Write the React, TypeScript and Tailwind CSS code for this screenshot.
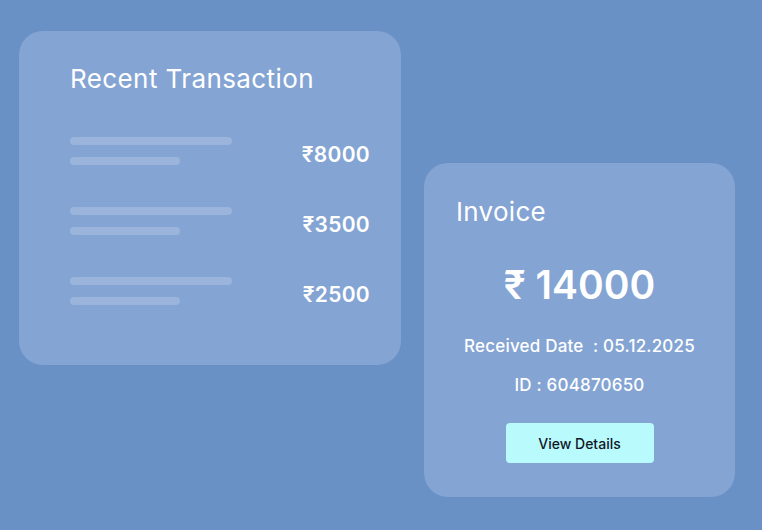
export default function App() {
  const rows = ["₹8000", "₹3500", "₹2500"];
  return (
    <div
      className="w-[762px] h-[530px] bg-[#6a91c6] flex items-start gap-[23px] pl-[19px] pt-[31px] overflow-hidden"
      style={{ fontFamily: "Inter, 'Noto Sans', sans-serif" }}
    >
      <div className="w-[382px] h-[334px] rounded-[24px] bg-[#84a4d3] pl-[51px] pr-[31px] pt-[31px] flex flex-col">
        <div className="text-white text-[26px] leading-[34px] font-normal tracking-[0.4px]">Recent Transaction</div>
        <div className="mt-[41px] flex flex-col gap-[42px]">
          {rows.map((r) => (
            <div key={r} className="flex items-center justify-between h-[28px]">
              <div className="flex flex-col gap-[12px]">
                <div className="w-[162px] h-[8px] rounded-full bg-[#9ab4dc]" />
                <div className="w-[110px] h-[8px] rounded-full bg-[#9ab4dc]" />
              </div>
              <div className="text-white text-[21px] font-semibold leading-none mt-[6px] tracking-[0.3px]">{r}</div>
            </div>
          ))}
        </div>
      </div>
      <div className="mt-[132px] w-[311px] h-[334px] rounded-[24px] bg-[#84a4d3] pt-[32px] flex flex-col">
        <div className="pl-[32px] text-white text-[26px] leading-[34px] font-normal tracking-[0.3px]">Invoice</div>
        <div className="mt-[32px] text-center text-white text-[39px] leading-[48px] font-semibold">₹ 14000</div>
        <div className="mt-[25px] text-center text-white text-[17px] leading-[24px] font-medium tracking-[0.2px]">Received Date&nbsp; : 05.12.2025</div>
        <div className="mt-[15px] text-center text-white text-[17px] leading-[24px] font-medium tracking-[0.2px]">ID : 604870650</div>
        <div className="mt-[26px] flex justify-center">
          <button className="w-[148px] h-[40px] rounded-[4px] bg-[#b9fbfd] text-[#111827] text-[14px] font-medium">View Details</button>
        </div>
      </div>
    </div>
  );
}
